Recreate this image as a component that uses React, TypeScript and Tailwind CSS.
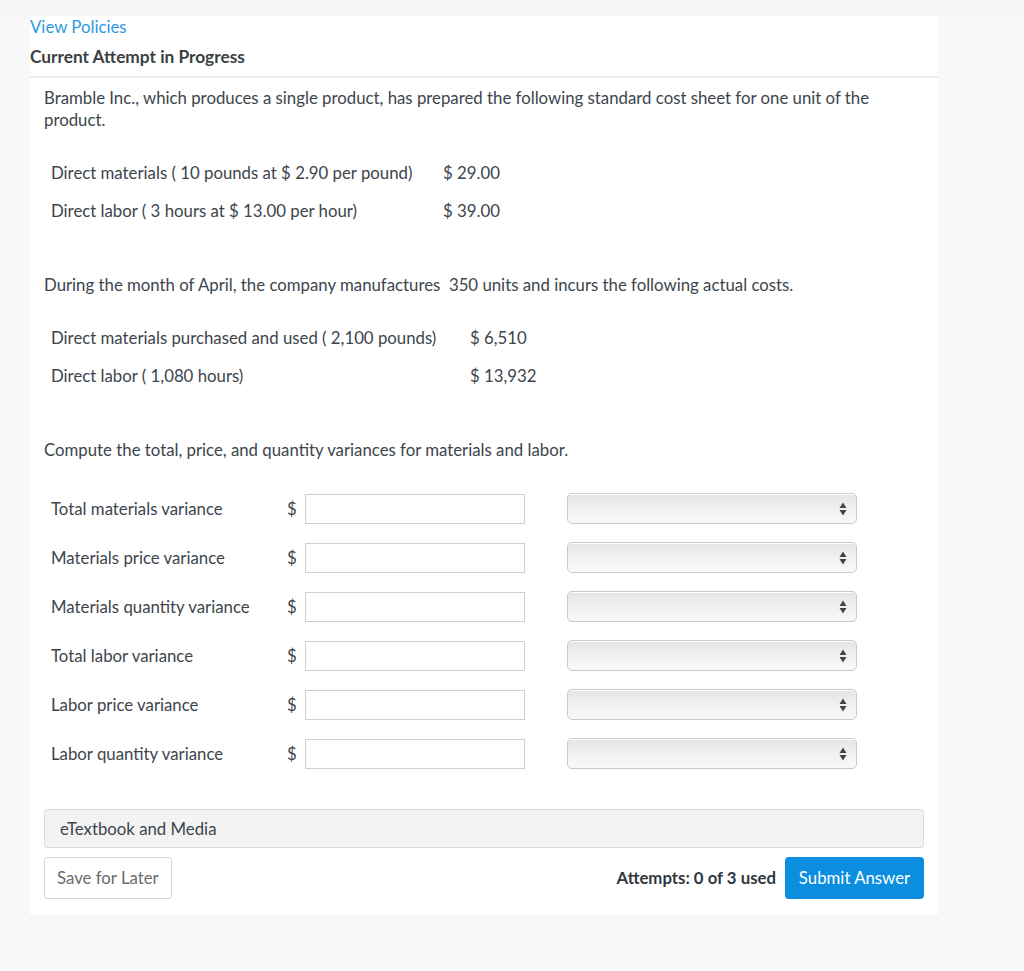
import React from 'react';

const standardRows = [
  { label: 'Direct materials ( 10 pounds at $ 2.90 per pound)', value: '$ 29.00' },
  { label: 'Direct labor ( 3 hours at $ 13.00 per hour)', value: '$ 39.00' },
];

const actualRows = [
  { label: 'Direct materials purchased and used ( 2,100 pounds)', value: '$ 6,510' },
  { label: 'Direct labor ( 1,080 hours)', value: '$ 13,932' },
];

const variances = [
  'Total materials variance',
  'Materials price variance',
  'Materials quantity variance',
  'Total labor variance',
  'Labor price variance',
  'Labor quantity variance',
];

const FakeSelect: React.FC = () => (
  <div className="relative w-[290px] h-[31px] rounded-[5px] border border-[#c9c9c9] bg-gradient-to-b from-[#e4e4e4] via-[#f1f1f1] to-[#f8f8f8] shadow-[inset_0_1px_0_#fff]">
    <svg className="absolute right-[9px] top-[8px]" width="8" height="14" viewBox="0 0 8 14">
      <path d="M4 0.5 L7.5 6 L0.5 6 Z" fill="#444" />
      <path d="M0.5 8 L7.5 8 L4 13.5 Z" fill="#444" />
    </svg>
  </div>
);

const App: React.FC = () => {
  return (
    <div className="min-h-[971px] bg-[#f8f8f8] font-['Lato','Liberation_Sans',sans-serif] text-[16.8px] text-[#3d454c]">
      <div className="h-[16px] bg-[#f5f5f5]" />
      <div className="ml-[30px] w-[908px] bg-white pb-[16px]">
        <a className="block leading-[22px] text-[#2d9ae2]">View Policies</a>
        <h2 className="mt-[8px] leading-[22px] text-[17.3px] font-bold text-[#3a3f44]">Current Attempt in Progress</h2>
        <div className="mt-[8px] h-[2px] bg-[#ececec]" />

        <div className="px-[14px] pt-[9px]">
          <p className="leading-[22px] pr-[40px]">
            Bramble Inc., which produces a single product, has prepared the following standard cost sheet for one unit of the product.
          </p>

          <div className="mt-[23px] pl-[7px]">
            {standardRows.map((r) => (
              <div key={r.label} className="flex h-[38px] items-center">
                <span className="w-[392px]">{r.label}</span>
                <span>{r.value}</span>
              </div>
            ))}
          </div>

          <p className="mt-[44px] leading-[22px]">
            During the month of April, the company manufactures&nbsp; 350 units and incurs the following actual costs.
          </p>

          <div className="mt-[23px] pl-[7px]">
            {actualRows.map((r) => (
              <div key={r.label} className="flex h-[38px] items-center">
                <span className="w-[419px]">{r.label}</span>
                <span>{r.value}</span>
              </div>
            ))}
          </div>

          <p className="mt-[44px] leading-[22px]">
            Compute the total, price, and quantity variances for materials and labor.
          </p>

          <div className="mt-[23px] pl-[7px]">
            {variances.map((v) => (
              <div key={v} className="flex h-[49px] items-center">
                <span className="w-[236px]">{v}</span>
                <span className="w-[18px]">$</span>
                <input
                  type="text"
                  className="w-[220px] h-[30px] border border-[#cfcfcf] bg-white outline-none"
                />
                <div className="ml-[42px]">
                  <FakeSelect />
                </div>
              </div>
            ))}
          </div>

          <div className="mt-[31px] h-[39px] flex items-center rounded-[3px] border border-[#dcdcdc] bg-[#f3f3f3] px-[15px] text-[#3d454c]">
            eTextbook and Media
          </div>

          <div className="mt-[9px] flex items-center">
            <button className="h-[42px] px-[12px] rounded-[3px] border border-[#d6d6d6] bg-white text-[#6b6b6b]">
              Save for Later
            </button>
            <span className="ml-auto mr-[9px] font-bold text-[#2f3740]">Attempts: 0 of 3 used</span>
            <button className="h-[42px] w-[139px] rounded-[4px] bg-[#0b8ee0] text-white">
              Submit Answer
            </button>
          </div>
        </div>
      </div>
    </div>
  );
};

export default App;
